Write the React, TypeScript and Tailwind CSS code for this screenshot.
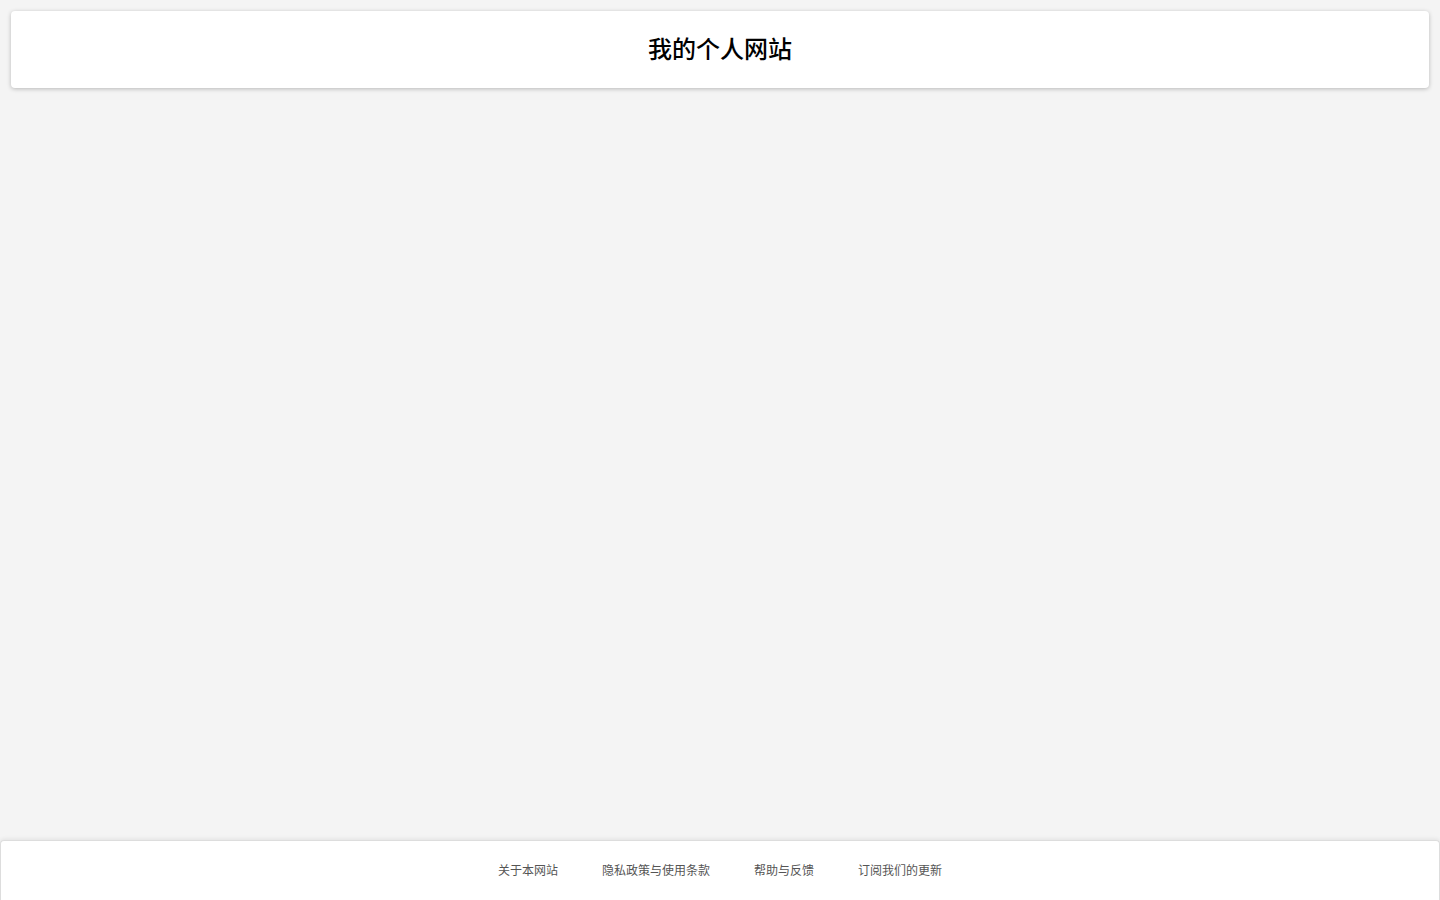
const LINKS = ['关于本网站', '隐私政策与使用条款', '帮助与反馈', '订阅我们的更新']

export default function App() {
  return (
    <div className="flex min-h-screen flex-col bg-[#f4f4f4] font-['Liberation_Sans','Noto_Sans_CJK_SC',sans-serif]">
      <header className="m-[11px] mb-0 flex h-[77px] items-center justify-center rounded bg-white shadow-[0_1px_4px_rgba(0,0,0,0.25)]">
        <h1 className="text-2xl font-medium text-black">我的个人网站</h1>
      </header>

      <main className="flex-1" />

      <footer className="flex h-[60px] items-center justify-center gap-[44px] rounded-t border border-b-0 border-[#dddddd] bg-white shadow-[0_-1px_4px_rgba(0,0,0,0.08)]">
        {LINKS.map((l) => (
          <a key={l} href="#" className="text-xs text-[#555555]">
            {l}
          </a>
        ))}
      </footer>
    </div>
  )
}
